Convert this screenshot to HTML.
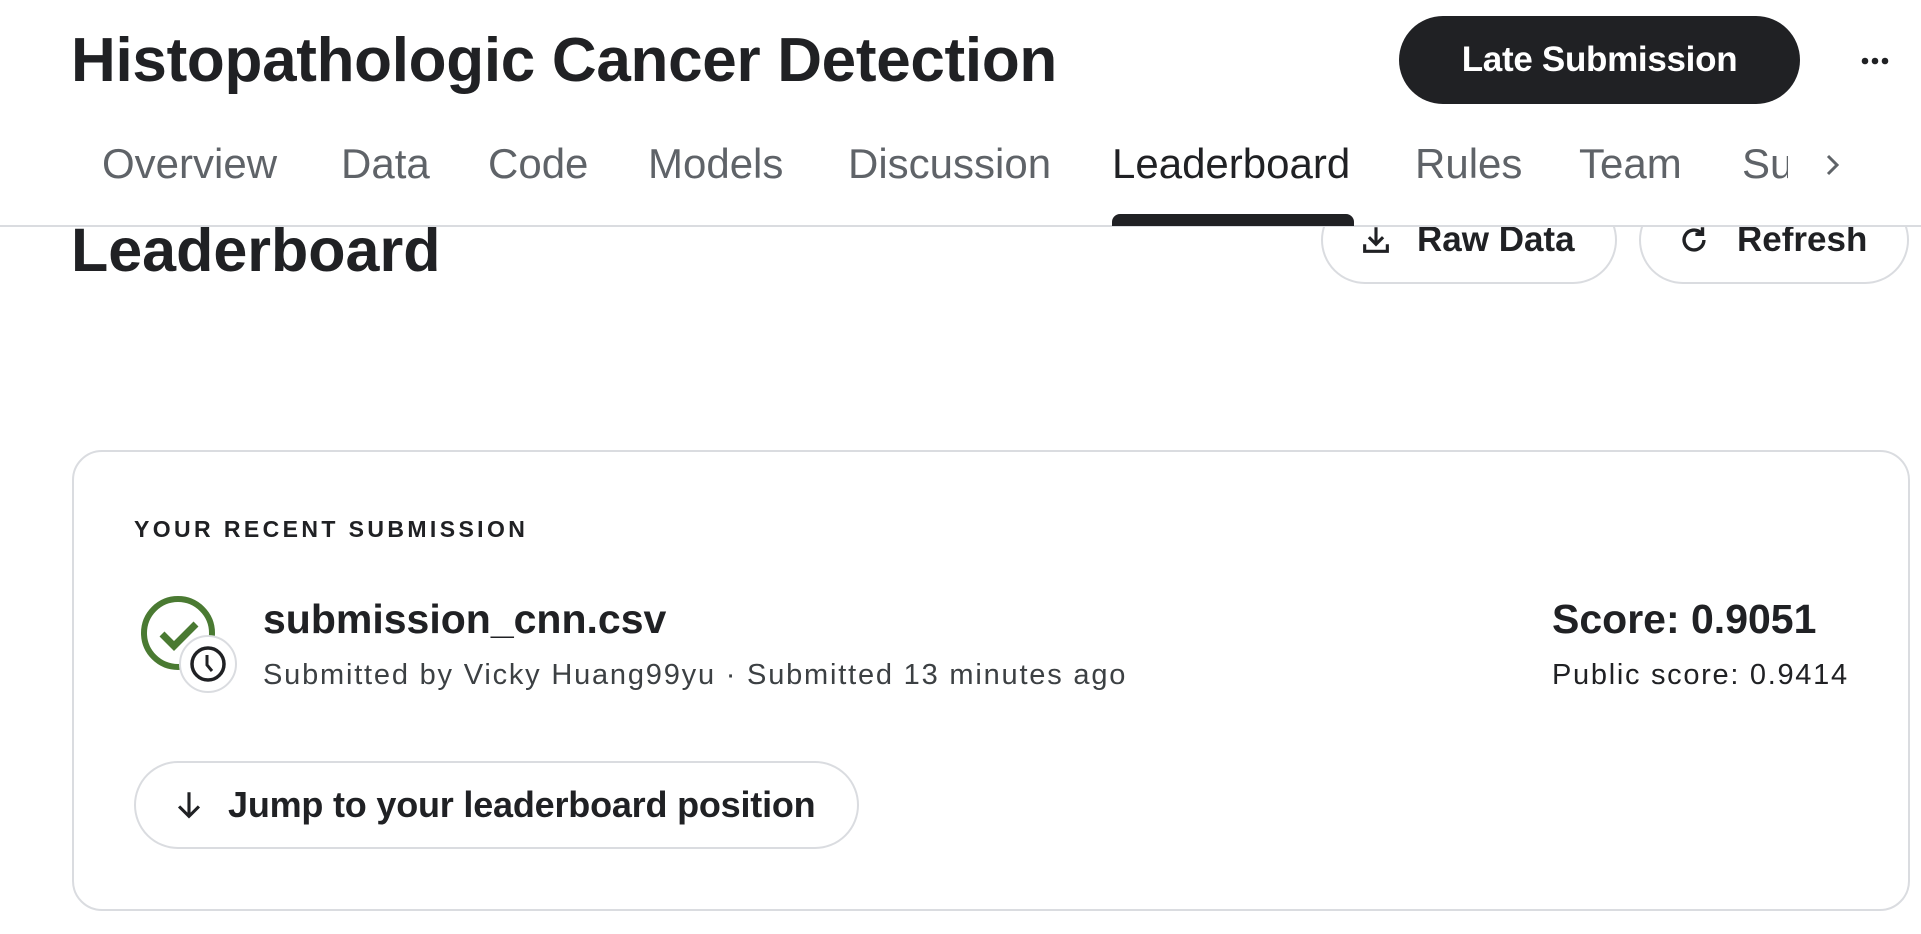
<!DOCTYPE html>
<html><head><meta charset="utf-8"><style>
*{margin:0;padding:0;box-sizing:border-box}
body{width:1921px;height:934px;background:#fff;font-family:"Liberation Sans",sans-serif;color:#202124;position:relative;overflow:hidden}
.abs{position:absolute;white-space:nowrap}
.header{position:absolute;left:0;top:0;width:1921px;height:227px;background:#fff;border-bottom:2px solid #dadce0;z-index:2}
.title{left:71px;top:24px;font-size:62px;font-weight:bold;letter-spacing:-0.3px;line-height:74px}
.late{left:1399px;top:16px;width:401px;height:88px;border-radius:44px;background:#202124;color:#fff;font-size:35px;font-weight:bold;display:flex;align-items:center;justify-content:center;letter-spacing:-0.3px}
.tab{top:140px;font-size:42px;color:#5f6368;line-height:48px}
.btn{border:2px solid #dadce0;border-radius:44px;background:#fff;display:flex;align-items:center;font-weight:bold;font-size:35px}
</style></head><body>
<div class="abs" style="left:71px;top:213px;font-size:61px;font-weight:bold;line-height:74px">Leaderboard</div>
<div class="abs btn" style="left:1321px;top:196px;width:296px;height:88px;padding-left:36px"><svg width="34" height="34" viewBox="0 0 24 24" fill="none" stroke="#202124" stroke-width="2.2"><path d="M12 3v12M7 10l5 5 5-5M4 15v5h16v-5"/></svg><span style="margin-left:24px">Raw Data</span></div>
<div class="abs btn" style="left:1639px;top:196px;width:270px;height:88px;padding-left:36px"><svg width="34" height="34" viewBox="0 0 24 24" fill="none" stroke="#202124" stroke-width="2.4"><path d="M19 12a7 7 0 1 1-2.2-5.1"/><path d="M18 3v5h-5" /></svg><span style="margin-left:26px">Refresh</span></div>

<div class="header">
<div class="abs title">Histopathologic Cancer Detection</div>
<div class="abs late">Late Submission</div>
<svg class="abs" style="left:1860px;top:54px" width="30" height="14" viewBox="0 0 30 14"><circle cx="5" cy="7" r="3.3" fill="#202124"/><circle cx="15" cy="7" r="3.3" fill="#202124"/><circle cx="25" cy="7" r="3.3" fill="#202124"/></svg>
<div class="abs tab" style="left:102px">Overview</div>
<div class="abs tab" style="left:341px">Data</div>
<div class="abs tab" style="left:488px">Code</div>
<div class="abs tab" style="left:648px">Models</div>
<div class="abs tab" style="left:848px">Discussion</div>
<div class="abs tab" style="left:1112px;color:#202124">Leaderboard</div>
<div class="abs tab" style="left:1415px">Rules</div>
<div class="abs tab" style="left:1579px">Team</div>
<div class="abs tab" style="left:1742px;width:46px;overflow:hidden">Su</div>
<svg class="abs" style="left:1820px;top:150px" width="24" height="30" viewBox="0 0 24 30" fill="none" stroke="#5f6368" stroke-width="3"><path d="M8 6l9 9-9 9"/></svg>
<div class="abs" style="left:1112px;top:214px;width:242px;height:12px;background:#202124;border-radius:8px 8px 0 0"></div>
</div>

<div class="abs" style="left:72px;top:450px;width:1838px;height:461px;border:2px solid #dadce0;border-radius:30px"></div>
<div class="abs" style="left:134px;top:516px;font-size:23px;font-weight:bold;letter-spacing:3.4px;color:#202124">YOUR RECENT SUBMISSION</div>
<svg class="abs" style="left:130px;top:590px" width="120" height="110" viewBox="0 0 120 110">
<circle cx="48" cy="43" r="34" fill="none" stroke="#4a7a32" stroke-width="6"/>
<path d="M32 44l12 12 22-22" fill="none" stroke="#4a7a32" stroke-width="7"/>
<circle cx="78" cy="74" r="28" fill="#fff" stroke="#dadce0" stroke-width="2"/>
<circle cx="78" cy="74" r="16" fill="none" stroke="#202124" stroke-width="3.5"/>
<path d="M77 65v10l5 6" fill="none" stroke="#202124" stroke-width="3"/>
</svg>
<div class="abs" style="left:263px;top:594px;font-size:41px;font-weight:bold;line-height:50px">submission_cnn.csv</div>
<div class="abs" style="left:263px;top:657px;font-size:29px;color:#3c4043;line-height:36px;letter-spacing:1.8px">Submitted by Vicky Huang99yu · Submitted 13 minutes ago</div>
<div class="abs" style="left:1552px;top:594px;font-size:41px;font-weight:bold;line-height:50px">Score: 0.9051</div>
<div class="abs" style="left:1552px;top:657px;font-size:29px;color:#202124;line-height:36px;letter-spacing:1.7px">Public score: 0.9414</div>
<div class="abs btn" style="left:134px;top:761px;width:725px;height:88px;padding-left:36px"><svg width="34" height="34" viewBox="0 0 24 24" fill="none" stroke="#202124" stroke-width="2.2"><path d="M12 3v17M5 13l7 7 7-7"/></svg><span style="margin-left:22px;font-size:36px;letter-spacing:-0.2px">Jump to your leaderboard position</span></div>
</body></html>
